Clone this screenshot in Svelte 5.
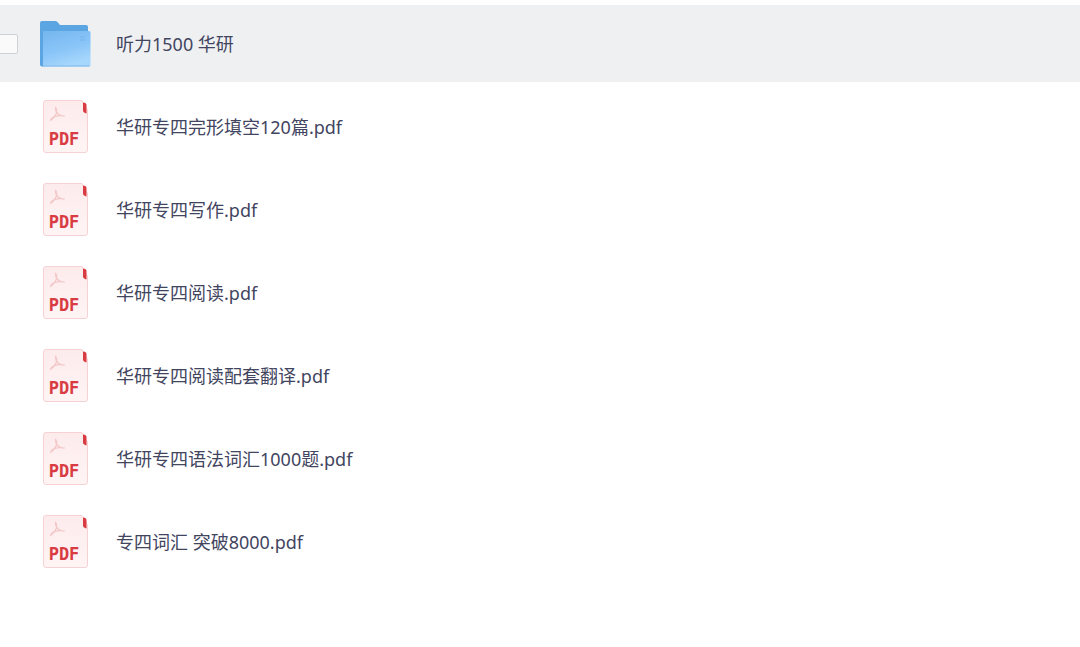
<script>
  let files = $state([
    { id: 1, name: '听力1500 华研', type: 'folder', checked: false },
    { id: 2, name: '华研专四完形填空120篇.pdf', type: 'pdf' },
    { id: 3, name: '华研专四写作.pdf', type: 'pdf' },
    { id: 4, name: '华研专四阅读.pdf', type: 'pdf' },
    { id: 5, name: '华研专四阅读配套翻译.pdf', type: 'pdf' },
    { id: 6, name: '华研专四语法词汇1000题.pdf', type: 'pdf' },
    { id: 7, name: '专四词汇 突破8000.pdf', type: 'pdf' },
  ]);

  let activeId = $state(1);
</script>

<main>
  <ul class="file-list">
    {#each files as file (file.id)}
      <li class="file-row" class:active={file.id === activeId}>
        <div class="file-check">
          {#if file.id === activeId}
            <input type="checkbox" aria-label={file.name} bind:checked={file.checked}>
          {/if}
        </div>
        <button class="file-open" onclick={() => activeId = file.id}>
          {#if file.type === 'folder'}
            <svg class="file-icon" viewBox="0 0 54 54" aria-hidden="true">
              <defs>
                <linearGradient id="folder-front" x1="0" y1="0" x2="0.4" y2="1">
                  <stop offset="0" stop-color="#74b6ef" />
                  <stop offset="0.6" stop-color="#8ac5f8" />
                  <stop offset="1" stop-color="#a5d6fc" />
                </linearGradient>
              </defs>
              <path d="M2 6Q2 4 4 4H17Q18.500 4 19.500 5L22 8H48Q50 8 50 10V48H4Q2 48 2 46Z" fill="#5aa5e2" />
              <path d="M4 14H51Q52.500 14 52.500 15.500V48Q52.500 49.500 51 49.500H4Z" fill="url(#folder-front)" />
              <path d="M2 12V47.500Q2 49.500 4 49.500H5V14Z" fill="#5ca5e3" />
              <path d="M5 49H51.500" stroke="#7eb9e9" />
              <path d="M42 20h5M42 23h5" stroke="#76b3ea" stroke-width="1" />
            </svg>
          {:else}
            <svg class="file-icon" viewBox="0 0 54 54" aria-hidden="true">
              <defs>
                <linearGradient id="page-{file.id}" x1="0" y1="0" x2="0" y2="1">
                  <stop offset="0" stop-color="#fdebec" />
                  <stop offset="1" stop-color="#fff4f4" />
                </linearGradient>
              </defs>
              <path d="M8 0.500H44L49.500 10V50Q49.500 52.500 47 52.500H8Q5.500 52.500 5.500 50V3Q5.500 0.500 8 0.500Z" fill="url(#page-{file.id})" stroke="#f7d2d4" />
              <path d="M45 2.500Q48.500 2.500 48.500 5V13.500Q45 12.500 45 10.500Z" fill="#d93b42" />
              <path d="M17.500 7C20.500 11 17.500 17 12.500 20.500C13.500 17 19 14.500 26.500 16C21 16.500 17 12.500 17.500 7Z" fill="none" stroke="#f3c8c9" stroke-width="1.200" stroke-linejoin="round" />
              <text x="26" y="45" text-anchor="middle">PDF</text>
            </svg>
          {/if}
          <span class="file-name">{file.name}</span>
        </button>
      </li>
    {/each}
  </ul>
</main>

<style>
  :global(body) {
    margin: 0;
    background: #fff;
  }

  main {
    padding: 5px 0;
    overflow: hidden;
    font-family: 'Noto Sans', 'Noto Sans CJK SC', sans-serif;
    color: #424560;
  }

  .file-list {
    display: flex;
    flex-direction: column;
    gap: 6px;
    margin: 0;
    padding: 0;
    list-style: none;
  }

  .file-row {
    display: flex;
    align-items: center;
    min-height: 77px;
  }

  .file-row.active { background: #eff0f2; }

  .file-check {
    display: flex;
    flex: 0 0 38px;
  }

  .file-check input {
    appearance: none;
    box-sizing: border-box;
    width: 20px;
    height: 20px;
    margin: 0 0 0 -2px;
    border: 1px solid #cfd1d5;
    border-radius: 2px;
    background: #fafafb;
    cursor: pointer;
  }

  .file-check input:checked { background: #5ba6e3; }

  .file-open {
    display: flex;
    flex: 1;
    align-items: center;
    gap: 24px;
    padding: 0;
    border: none;
    background: none;
    color: inherit;
    font: inherit;
    text-align: left;
    cursor: pointer;
  }

  .file-icon {
    flex: none;
    width: 54px;
    height: 54px;
  }

  .file-icon text {
    fill: #d93b42;
    font-family: 'DejaVu Sans Mono', monospace;
    font-size: 17px;
    font-weight: 700;
  }

  .file-name {
    font-size: 18px;
    line-height: 24px;
  }
</style>
